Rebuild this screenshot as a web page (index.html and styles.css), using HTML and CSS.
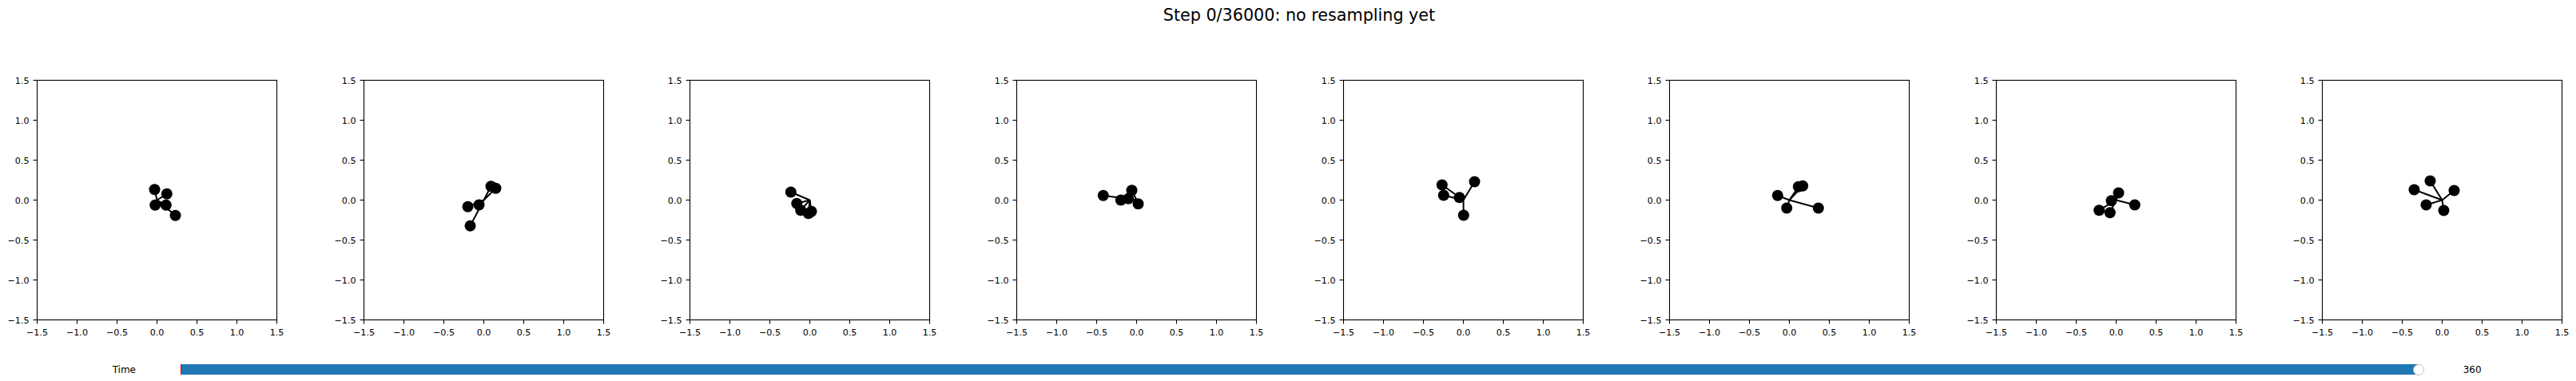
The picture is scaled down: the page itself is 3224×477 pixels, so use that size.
FILE: index.html
```html
<!DOCTYPE html>
<html lang="en">
<head>
    <meta charset="UTF-8">
    <meta name="viewport" content="width=device-width, initial-scale=1.0">
    <title>Step 0/36000: no resampling yet</title>
    <link rel="stylesheet" href="styles.css">
</head>
<body>
    <div class="figure">
        <div class="suptitle">Step 0/36000: no resampling yet</div>

        <div class="axes-row" id="axes-row"></div>

        <div class="slider-row">
            <div class="slider-label">Time</div>
            <div class="slider-track">
                <div class="slider-fill"></div>
                <div class="slider-init"></div>
                <div class="slider-handle"></div>
            </div>
            <div class="slider-value">360</div>
        </div>
    </div>

    <script>
        // particle positions for each of the 8 panels
        var frames = [
            [[-0.03, 0.133], [0.123, 0.077], [-0.023, -0.063], [0.113, -0.063], [0.23, -0.193]],
            [[-0.2, -0.083], [-0.06, -0.06], [0.09, 0.173], [0.15, 0.147], [-0.17, -0.323]],
            [[-0.237, 0.10], [-0.163, -0.043], [-0.113, -0.127], [-0.017, -0.167], [0.02, -0.143]],
            [[-0.417, 0.057], [-0.197, 0.0], [-0.103, 0.017], [-0.06, 0.123], [0.02, -0.047]],
            [[-0.267, 0.19], [-0.247, 0.06], [-0.05, 0.033], [0.14, 0.23], [0.003, -0.19]],
            [[-0.147, 0.057], [-0.033, -0.1], [0.113, 0.167], [0.167, 0.177], [0.363, -0.1]],
            [[-0.213, -0.127], [-0.077, -0.157], [-0.06, -0.007], [0.03, 0.09], [0.233, -0.06]],
            [[-0.35, 0.13], [-0.15, 0.24], [0.15, 0.12], [-0.2, -0.06], [0.02, -0.13]]
        ];

        var ticks = [-1.5, -1.0, -0.5, 0.0, 0.5, 1.0, 1.5];
        var row = document.getElementById('axes-row');

        function label(v) {
            return (v < 0 ? '\u2212' : '') + Math.abs(v).toFixed(1);
        }
        function px(v) { return 150.5 + 100 * v; }
        function py(v) { return 150.5 - 100 * v; }

        frames.forEach(function (pts) {
            var svg = '<svg class="axes" width="300" height="300" viewBox="0 0 300 300">';
            svg += '<rect class="spine" x="0.5" y="0.5" width="300" height="300"/>';

            ticks.forEach(function (t) {
                var x = px(t), y = py(t);
                svg += '<line class="tick" x1="' + x + '" y1="300.5" x2="' + x + '" y2="305.5"/>';
                svg += '<text class="xtick" x="' + x + '" y="320">' + label(t) + '</text>';
                svg += '<line class="tick" x1="0.5" y1="' + y + '" x2="-4.5" y2="' + y + '"/>';
                svg += '<text class="ytick" x="-9.5" y="' + (y + 4.2) + '">' + label(t) + '</text>';
            });

            pts.forEach(function (p) {
                svg += '<line class="link" x1="' + px(0) + '" y1="' + py(0) + '" x2="' + px(p[0]) + '" y2="' + py(p[1]) + '"/>';
            });
            pts.forEach(function (p) {
                svg += '<circle class="particle" cx="' + px(p[0]) + '" cy="' + py(p[1]) + '" r="7"/>';
            });

            svg += '</svg>';
            row.insertAdjacentHTML('beforeend', svg);
        });
    </script>
</body>
</html>
```

FILE: styles.css
```css
body {
    margin: 0;
    background: #ffffff;
    color: #000000;
    font-family: "DejaVu Sans", sans-serif;
}

.figure {
    width: 3224px;
    height: 477px;
}

.suptitle {
    height: 100px;
    box-sizing: border-box;
    padding-top: 7px;
    padding-left: 28px;
    text-align: center;
    font-size: 20.7px;
    line-height: normal;
}

.axes-row {
    display: flex;
    column-gap: 108.57px;
    padding-left: 46.3px;
    height: 300px;
}

.axes {
    flex: none;
    overflow: visible;
}

.spine {
    fill: none;
    stroke: #000000;
    stroke-width: 1.1;
}

.tick {
    stroke: #000000;
    stroke-width: 1.1;
}

.xtick,
.ytick {
    font-family: "DejaVu Sans", sans-serif;
    font-size: 11.1px;
    fill: #000000;
}

.xtick {
    text-anchor: middle;
}

.ytick {
    text-anchor: end;
}

.link {
    stroke: #000000;
    stroke-width: 2;
}

.particle {
    fill: #000000;
}

.slider-row {
    display: flex;
    align-items: center;
    height: 26px;
    margin-top: 49.5px;
    font-size: 12px;
}

.slider-label {
    width: 170px;
    text-align: right;
    margin-right: 56px;
}

.slider-track {
    position: relative;
    width: 2800.7px;
    height: 13px;
    background: lightgrey;
}

.slider-fill {
    width: 100%;
    height: 100%;
    background: #1f77b4;
}

.slider-init {
    position: absolute;
    left: -0.5px;
    top: 0;
    bottom: 0;
    width: 1.5px;
    background: #ff0000;
}

.slider-handle {
    position: absolute;
    right: -7px;
    top: 50%;
    width: 12px;
    height: 12px;
    margin-top: -7px;
    border: 1px solid #bfbfbf;
    border-radius: 50%;
    background: #ffffff;
}

.slider-value {
    margin-left: 56px;
}
```
